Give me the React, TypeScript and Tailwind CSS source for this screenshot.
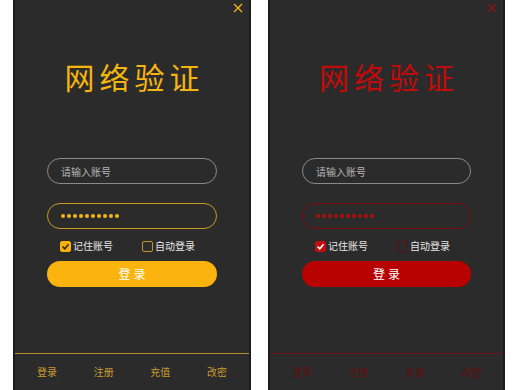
import React from 'react';

type Theme = {
  close: string;
  title: string;
  pwdBorder: string;
  dot: string;
  checkOn: string;
  checkMark: string;
  checkOff: string;
  button: string;
  line: string;
  nav: string;
};

const gold: Theme = {
  close: '#f2b61c',
  title: 'text-[#f5b50f]',
  pwdBorder: 'border-[#c99a22]',
  dot: 'bg-[#f7b90d]',
  checkOn: 'bg-[#f5b20e] border-[#f5b20e]',
  checkMark: '#3a2a00',
  checkOff: 'border-[#c49428]',
  button: 'bg-[#fbb30d]',
  line: 'border-[#b98a2c]',
  nav: 'text-[#c89a2e]',
};

const red: Theme = {
  close: '#8e1414',
  title: 'text-[#c20a0a]',
  pwdBorder: 'border-[#7e0c0c]',
  dot: 'bg-[#b00f0f]',
  checkOn: 'bg-[#c00d0d] border-[#c00d0d]',
  checkMark: '#ffffff',
  checkOff: 'border-[#5e0d0d]',
  button: 'bg-[#b80202]',
  line: 'border-[#701515]',
  nav: 'text-[#5e1010]',
};

const Check = ({ on, theme, label }: { on: boolean; theme: Theme; label: string }) => (
  <div className="flex items-center gap-[2px]">
    <span
      className={`flex h-[11px] w-[11px] items-center justify-center rounded-[2px] border ${on ? theme.checkOn : theme.checkOff}`}
    >
      {on && (
        <svg width="9" height="9" viewBox="0 0 10 10">
          <path d="M1.8 5.2 L4.2 7.5 L8.4 2.6" fill="none" stroke={theme.checkMark} strokeWidth="1.8" />
        </svg>
      )}
    </span>
    <span className="text-[10px] leading-[14px] text-[#e6e6e6]">{label}</span>
  </div>
);

const Panel = ({ theme, width }: { theme: Theme; width: string }) => (
  <div className={`relative flex h-[390px] ${width} flex-col border-x-2 border-[#1c1c1c] bg-[#2b2b2b]`}>
    <svg className="absolute right-[6px] top-[3px]" width="10" height="10" viewBox="0 0 10 10">
      <path d="M1 1 L9 9 M9 1 L1 9" stroke={theme.close} strokeWidth="1.3" />
    </svg>
    <div className={`pl-[5px] pt-[60px] text-center text-[30px] leading-[32px] tracking-[5px] ${theme.title}`}>
      网络验证
    </div>
    <div className="mx-[32px] mt-[66px] flex h-[26px] items-center rounded-full border border-[#8a8a8a] px-[13px]">
      <span className="text-[10px] text-[#b4b4b4]">请输入账号</span>
    </div>
    <div className={`mx-[32px] mt-[19px] flex h-[26px] items-center gap-[2px] rounded-full border px-[13px] ${theme.pwdBorder}`}>
      {Array.from({ length: 10 }).map((_, i) => (
        <span key={i} className={`h-[4px] w-[4px] rounded-full ${theme.dot}`} />
      ))}
    </div>
    <div className="mt-[10px] flex pl-[45px]">
      <Check on theme={theme} label="记住账号" />
      <div className="ml-[29px]">
        <Check on={false} theme={theme} label="自动登录" />
      </div>
    </div>
    <div
      className={`mx-[32px] mt-[8px] flex h-[26px] items-center justify-center rounded-full pl-[3px] text-[12px] tracking-[3px] text-white ${theme.button}`}
    >
      登录
    </div>
    <div className="flex-1" />
    <div className={`flex h-[37px] items-center justify-between border-t px-[22px] pb-[2px] ${theme.line}`}>
      {['登录', '注册', '充值', '改密'].map((t) => (
        <span key={t} className={`text-[10px] ${theme.nav}`}>
          {t}
        </span>
      ))}
    </div>
  </div>
);

export default function App() {
  return (
    <div
      className="flex h-[390px] w-[520px] bg-white pl-[13px]"
      style={{ fontFamily: '"Noto Sans CJK SC", "Noto Sans", sans-serif' }}
    >
      <Panel theme={gold} width="w-[238px]" />
      <div className="w-[17px]" />
      <Panel theme={red} width="w-[237px]" />
    </div>
  );
}
